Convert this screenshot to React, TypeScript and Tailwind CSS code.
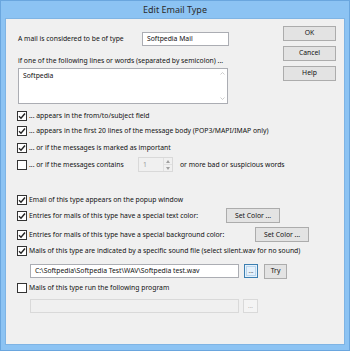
import React from "react";

const Check = ({ checked }: { checked: boolean }) => (
  <div className="w-[10px] h-[10px] border border-[#333] bg-white flex items-center justify-center shrink-0">
    {checked && (
      <svg width="8" height="8" viewBox="0 0 8 8">
        <path d="M1 4.2 L3 6.2 L7 1.5" fill="none" stroke="#222" strokeWidth="1.4" />
      </svg>
    )}
  </div>
);

const CbRow = ({ checked, label, className = "" }: { checked: boolean; label: string; className?: string }) => (
  <div className={"flex items-center h-[14px] " + className}>
    <Check checked={checked} />
    <span className="ml-[2px] whitespace-nowrap">{label}</span>
  </div>
);

const Btn = ({ children, className = "" }: { children: React.ReactNode; className?: string }) => (
  <div className={"h-[15px] border border-[#acacac] bg-[#e3e3e3] flex items-center justify-center text-[#111] " + className}>
    {children}
  </div>
);

export default function App() {
  return (
    <div
      className="w-[350px] h-[351px] bg-[#8cc3f3] border border-[#6aa6de] flex flex-col text-[6.8px] text-[#111]"
      style={{ fontFamily: '"Noto Sans", sans-serif' }}
    >
      <div className="h-[17px] flex items-center justify-center text-[9px] text-[#2b2b2b] pt-[1px]">Edit Email Type</div>
      <div className="mx-[4px] mb-[5px] flex-1 bg-[#f0f0f0] border border-[#7fb4e4] flex flex-col">
        <div className="flex">
          <div className="pl-[12px] pt-[13px] flex flex-col">
            <div className="flex items-center h-[14px]">
              <span className="w-[124px] whitespace-nowrap">A mail is considered to be of type</span>
              <div className="w-[87px] h-[14px] border border-[#abadb3] bg-white flex items-center pl-[4px]">Softpedia Mail</div>
            </div>
            <div className="mt-[10px] whitespace-nowrap">if one of the following lines or words (separated by semicolon) ...</div>
            <div className="mt-[2px] w-[210px] h-[36px] border border-[#abadb3] bg-white flex">
              <div className="flex-1 pl-[4px] pt-[2px]">Softpedia</div>
              <div className="w-[9px] flex flex-col justify-between items-center py-[3px]">
                <svg width="5" height="3" viewBox="0 0 5 3"><path d="M0.5 2.5 L2.5 0.5 L4.5 2.5" fill="none" stroke="#c0c0c0" strokeWidth="0.8" /></svg>
                <svg width="5" height="3" viewBox="0 0 5 3"><path d="M0.5 0.5 L2.5 2.5 L4.5 0.5" fill="none" stroke="#c0c0c0" strokeWidth="0.8" /></svg>
              </div>
            </div>
          </div>
          <div className="ml-auto mr-[8px] pt-[7px] flex flex-col gap-[5px] w-[53px]">
            <Btn>OK</Btn>
            <Btn>Cancel</Btn>
            <Btn>Help</Btn>
          </div>
        </div>
        <div className="pl-[11px] flex flex-col">
          <CbRow className="mt-[5px]" checked label="... appears in the from/to/subject field" />
          <CbRow className="mt-[1px]" checked label="... appears in the first 20 lines of the message body (POP3/MAPI/IMAP only)" />
          <CbRow className="mt-[3px]" checked label="... or if the messages is marked as important" />
          <div className="flex items-center h-[15px] mt-[2px]">
            <Check checked={false} />
            <span className="ml-[2px] w-[109px] whitespace-nowrap">... or if the messages contains</span>
            <div className="w-[35px] h-[15px] border border-[#d9d9d9] bg-[#f0f0f0] flex">
              <div className="flex-1 pl-[4px] text-[#9a9a9a] flex items-center">1</div>
              <div className="w-[9px] flex flex-col border-l border-[#e0e0e0]">
                <div className="flex-1 flex items-center justify-center border-b border-[#e0e0e0]">
                  <svg width="4" height="3" viewBox="0 0 4 3"><path d="M0 3 L2 0 L4 3Z" fill="#a0a0a0" /></svg>
                </div>
                <div className="flex-1 flex items-center justify-center">
                  <svg width="4" height="3" viewBox="0 0 4 3"><path d="M0 0 L2 3 L4 0Z" fill="#a0a0a0" /></svg>
                </div>
              </div>
            </div>
            <span className="ml-[7px] whitespace-nowrap">or more bad or suspicious words</span>
          </div>
          <CbRow className="mt-[21px]" checked label="Email of this type appears on the popup window" />
          <div className="flex items-center h-[15px] mt-[1px]">
            <Check checked />
            <span className="ml-[2px] w-[197px] whitespace-nowrap">Entries for mails of this type have a special text color:</span>
            <Btn className="w-[54px]">Set Color ...</Btn>
          </div>
          <div className="flex items-center h-[15px] mt-[4px]">
            <Check checked />
            <span className="ml-[2px] w-[226px] whitespace-nowrap">Entries for mails of this type have a special background color:</span>
            <Btn className="w-[54px]">Set Color ...</Btn>
          </div>
          <CbRow className="mt-[2px]" checked label="Mails of this type are indicated by a specific sound file (select silent.wav for no sound)" />
          <div className="flex items-center ml-[13px] mt-[6px] h-[14px]">
            <div className="w-[209px] h-[14px] border border-[#abadb3] bg-white flex items-center pl-[4px] whitespace-nowrap">C:\Softpedia\Softpedia Test\WAV\Softpedia test.wav</div>
            <div className="ml-[5px] w-[14px] h-[14px] border border-[#3c7fb1] bg-[#e5f1fb] flex items-center justify-center">
              <div className="w-[10px] h-[10px] border border-[#b9d6ee] flex items-center justify-center text-[6px] leading-none">...</div>
            </div>
            <Btn className="ml-[6px] w-[23px] h-[14px]">Try</Btn>
          </div>
          <CbRow className="mt-[3px]" checked={false} label="Mails of this type run the following program" />
          <div className="flex items-center ml-[13px] mt-[4px] h-[14px]">
            <div className="w-[209px] h-[14px] border border-[#d9d9d9] bg-[#f0f0f0]" />
            <div className="ml-[4px] w-[15px] h-[14px] border border-[#d9d9d9] bg-[#f4f4f4] flex items-center justify-center text-[6px] text-[#a0a0a0]">...</div>
          </div>
        </div>
      </div>
    </div>
  );
}
